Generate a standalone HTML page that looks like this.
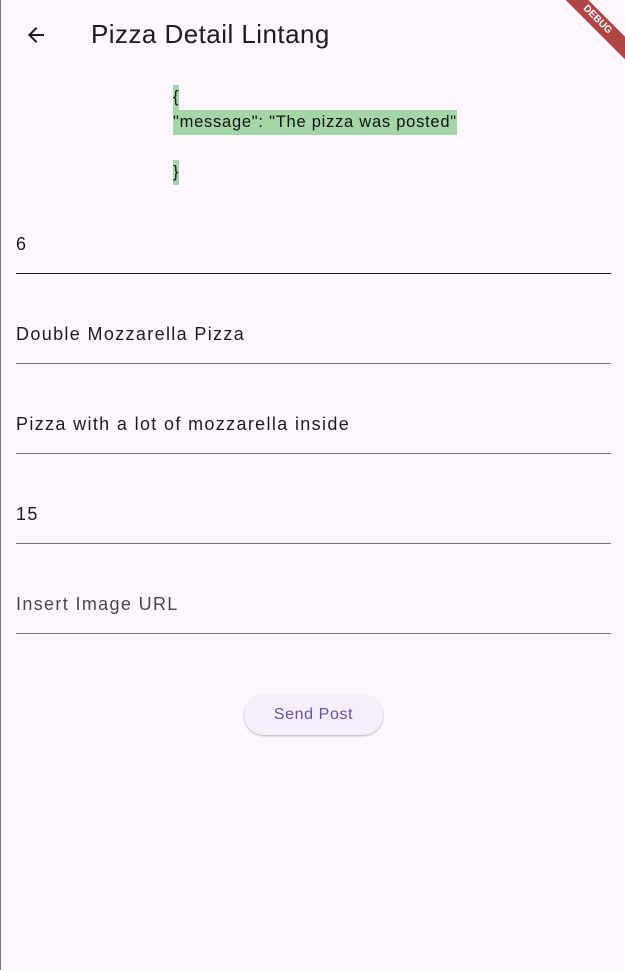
<!DOCTYPE html>
<html><head><style>
body{margin:0;width:625px;height:970px;background:#fef7ff;font-family:"Liberation Sans",sans-serif;position:relative;overflow:hidden;color:#1d1b20}
.lb{position:absolute;left:0;top:0;width:1px;height:970px;background:#777}
.title{position:absolute;left:91px;top:19px;font-size:26px;letter-spacing:0.45px}
.back{position:absolute;left:24px;top:23px}
.hl{position:absolute;left:173px;background:#a5d6a7;font-size:16.5px;letter-spacing:0.75px;line-height:25px;white-space:pre;color:#111}
.f{position:absolute;left:16px;width:595px;border-bottom:1px solid #79747e;font-size:18px;letter-spacing:1.35px}
.f span{position:absolute;left:0;top:4px}
.btn{position:absolute;left:244px;top:695px;width:139px;height:40px;border-radius:20px;background:#f6eff9;box-shadow:0 1px 2px rgba(0,0,0,.3);color:#6750a4;font-size:16px;letter-spacing:0.6px;text-align:center;line-height:40px}
.rib{position:absolute;right:-32px;top:12px;width:120px;height:16px;background:#b04545;transform:rotate(45deg);color:#fff;font-size:10px;font-weight:bold;text-align:center;line-height:16px}
</style></head><body>
<div class="lb"></div>
<svg class="back" width="24" height="24" viewBox="0 0 24 24"><path d="M20 11H7.83l5.59-5.59L12 4l-8 8 8 8 1.41-1.41L7.83 13H20v-2z" fill="#1d1b20"/></svg>
<div class="title">Pizza Detail Lintang</div>
<div class="rib">DEBUG</div>
<div class="hl" style="top:85px">{</div>
<div class="hl" style="top:110px">"message": "The pizza was posted"</div>
<div class="hl" style="top:160px">}</div>
<div class="f" style="top:230px;height:43px;border-color:#1d1b20"><span>6</span></div>
<div class="f" style="top:320px;height:43px"><span>Double Mozzarella Pizza</span></div>
<div class="f" style="top:410px;height:43px"><span>Pizza with a lot of mozzarella inside</span></div>
<div class="f" style="top:500px;height:43px"><span>15</span></div>
<div class="f" style="top:590px;height:43px;color:#49454f"><span>Insert Image URL</span></div>
<div class="btn">Send Post</div>
</body></html>
